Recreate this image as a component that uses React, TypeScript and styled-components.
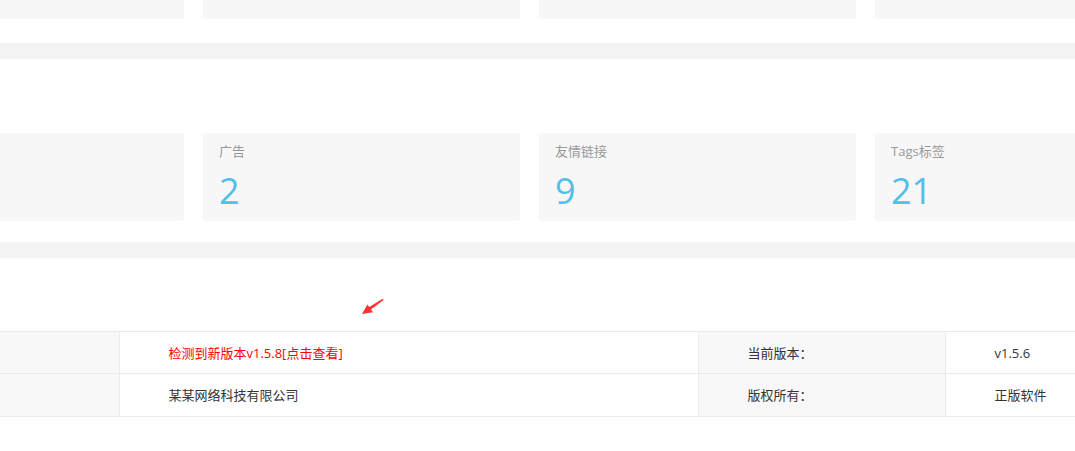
import React from "react";
import styled, { createGlobalStyle } from "styled-components";

const Global = createGlobalStyle`
  html, body { margin: 0; padding: 0; background: #fff; overflow: hidden; }
  body { font-family: "Open Sans", "Noto Sans CJK SC", sans-serif; color: #333; }
`;

const Page = styled.div`
  width: 1075px;
  overflow: hidden;
`;

const CardRow = styled.div<{ $top?: boolean }>`
  display: grid;
  grid-template-columns: repeat(4, 317px);
  column-gap: 19px;
  margin-left: -133px;
  margin-top: ${(p) => (p.$top ? "-69px" : "0")};
`;

const Card = styled.div`
  height: 88px;
  box-sizing: border-box;
  background: #f7f7f7;
  border-radius: 3px;
  padding: 8px 16px 10px;
  display: flex;
  flex-direction: column;
  gap: 10px;
`;

const Label = styled.div`
  font-size: 13px;
  line-height: 20px;
  color: #999;
`;

const Value = styled.div`
  font-size: 36px;
  line-height: 40px;
  color: #4fc0ea;
  font-weight: 400;
`;

const Band = styled.div<{ $mt: number; $mb: number }>`
  height: 16px;
  background: #f3f3f3;
  margin-top: ${(p) => p.$mt}px;
  margin-bottom: ${(p) => p.$mb}px;
`;

const ArrowArea = styled.div`
  height: 73px;
  box-sizing: border-box;
  padding: 40px 0 0 361px;
`;

const Table = styled.table`
  border-collapse: collapse;
  width: 1076px;
  table-layout: fixed;
  font-size: 13px;
`;

const Row = styled.tr<{ $h: number }>`
  height: ${(p) => p.$h}px;
`;

const Cell = styled.td<{ $gray?: boolean; $w: number }>`
  width: ${(p) => p.$w}px;
  box-sizing: border-box;
  padding: 0 0 0 49px;
  border: 1px solid #ebebeb;
  background: ${(p) => (p.$gray ? "#f8f8f8" : "#fff")};
  line-height: 20px;
  color: #333;
  white-space: nowrap;
  &:first-child { border-left: none; }
`;

const Notice = styled.a`
  color: #ff0000;
  text-decoration: none;
`;

const stats = [
  { label: "", value: "" },
  { label: "广告", value: "2" },
  { label: "友情链接", value: "9" },
  { label: "Tags标签", value: "21" },
];

const rows = [
  { info: <Notice>检测到新版本v1.5.8[点击查看]</Notice>, key: "当前版本：", val: "v1.5.6", h: 42 },
  { info: "某某网络科技有限公司", key: "版权所有：", val: "正版软件", h: 43 },
];

export default function App() {
  return (
    <Page>
      <Global />
      <CardRow $top>
        {[0, 1, 2, 3].map((i) => (
          <Card key={i} />
        ))}
      </CardRow>
      <Band $mt={24} $mb={74} />
      <CardRow>
        {stats.map((s, i) => (
          <Card key={i}>
            <Label>{s.label}</Label>
            <Value>{s.value}</Value>
          </Card>
        ))}
      </CardRow>
      <Band $mt={21} $mb={0} />
      <ArrowArea>
        <svg width="24" height="17" viewBox="0 0 24 17">
          <polygon
            points="1,16 12,14.2 10,11.6 22.6,2 21.6,0.8 8.3,9.1 6.4,6.4"
            fill="#ff3333"
          />
        </svg>
      </ArrowArea>
      <Table>
        <tbody>
          {rows.map((r, i) => (
            <Row key={i} $h={r.h}>
              <Cell $gray $w={119} />
              <Cell $w={579}>{r.info}</Cell>
              <Cell $gray $w={247}>{r.key}</Cell>
              <Cell $w={131}>{r.val}</Cell>
            </Row>
          ))}
        </tbody>
      </Table>
    </Page>
  );
}
